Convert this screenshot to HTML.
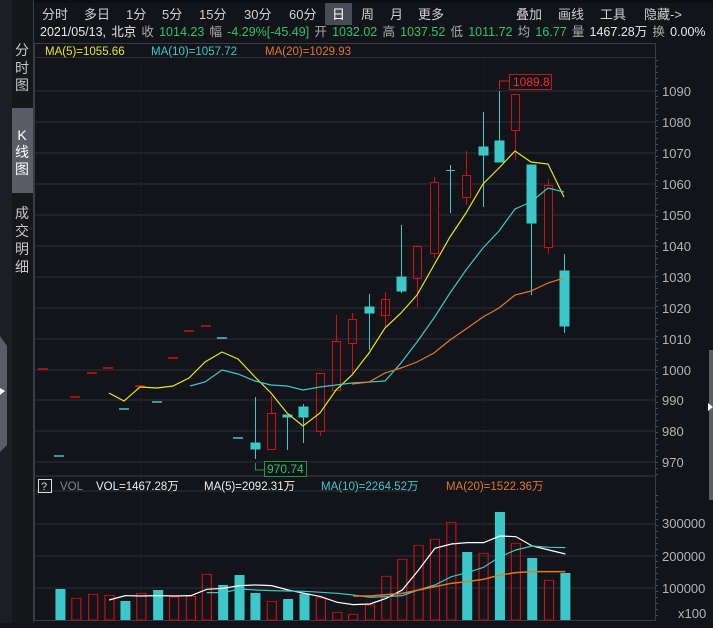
<!DOCTYPE html><html><head><meta charset="utf-8"><style>
body{margin:0;width:713px;height:623px;overflow:hidden;background:#121419;font-family:"Liberation Sans","Noto Sans CJK SC",sans-serif;}
svg text{font-family:"Liberation Sans","Noto Sans CJK SC",sans-serif;}
</style></head><body>
<svg width="713" height="623" viewBox="0 0 713 623" xmlns="http://www.w3.org/2000/svg">
<rect width="713" height="623" fill="#121419"/>
<rect x="0" y="0" width="12" height="623" fill="#1d1e23"/>
<rect x="12" y="0" width="21" height="623" fill="#16171b"/>
<rect x="33" y="0" width="1" height="623" fill="#3a3c42"/>
<rect x="12" y="108" width="21" height="85" fill="#5b5d66"/>
<path d="M0 336 L7 346 L7 445 L0 452Z" fill="#5b5d66"/>
<path d="M5 391 L0 388 L0 395Z" fill="#fff"/>
<g fill="#c8c8c8" font-size="14" text-anchor="middle">
<text x="22" y="55">分</text><text x="22" y="73">时</text><text x="22" y="90">图</text>
<text x="22" y="140" fill="#fff">K</text><text x="22" y="157" fill="#fff">线</text><text x="22" y="174" fill="#fff">图</text>
<text x="22" y="218">成</text><text x="22" y="236">交</text><text x="22" y="254">明</text><text x="22" y="272">细</text>
</g>
<rect x="34" y="0" width="679" height="3" fill="#0d0e11"/>
<rect x="325" y="3" width="27" height="22" fill="#4a4c55"/>
<g fill="#d0d0d0" font-size="13">
<text x="42" y="19">分时</text><text x="84" y="19">多日</text><text x="126" y="19">1分</text><text x="162" y="19">5分</text><text x="199" y="19">15分</text><text x="244" y="19">30分</text><text x="289" y="19">60分</text><text x="332" y="19" fill="#fff">日</text><text x="361" y="19">周</text><text x="390" y="19">月</text><text x="418" y="19">更多</text>
<text x="516" y="19">叠加</text><text x="558" y="19">画线</text><text x="600" y="19">工具</text><text x="644" y="19">隐藏-&gt;</text>
</g>
<g font-size="12.5">
<text x="40" y="36" fill="#e8e8e8" word-spacing="1.7">2021/05/13, 北京 <tspan fill="#aaa">收</tspan> <tspan fill="#2ec26a">1014.23</tspan> <tspan fill="#aaa">幅</tspan> <tspan fill="#2ec26a">-4.29%[-45.49]</tspan> <tspan fill="#aaa">开</tspan> <tspan fill="#2ec26a">1032.02</tspan> <tspan fill="#aaa">高</tspan> <tspan fill="#2ec26a">1037.52</tspan> <tspan fill="#aaa">低</tspan> <tspan fill="#2ec26a">1011.72</tspan> <tspan fill="#aaa">均</tspan> <tspan fill="#2ec26a">16.77</tspan> <tspan fill="#aaa">量</tspan> 1467.28万 <tspan fill="#aaa">换</tspan> 0.00%</text>
</g>
<rect x="34.5" y="43.5" width="621" height="577" fill="none" stroke="#3a3c42"/>
<line x1="35" y1="57.5" x2="655" y2="57.5" stroke="#2c2e33"/>
<g font-size="11.5">
<text x="45" y="55" fill="#e6e61a">MA(5)=1055.66</text>
<text x="151" y="55" fill="#3cc8c8">MA(10)=1057.72</text>
<text x="265" y="55" fill="#e0782c">MA(20)=1029.93</text>
</g>
<g stroke="#2e3035" stroke-width="1">
<line x1="35" y1="91" x2="655" y2="91"/><line x1="35" y1="122" x2="655" y2="122"/><line x1="35" y1="153" x2="655" y2="153"/><line x1="35" y1="184" x2="655" y2="184"/><line x1="35" y1="215" x2="655" y2="215"/><line x1="35" y1="246" x2="655" y2="246"/><line x1="35" y1="277" x2="655" y2="277"/><line x1="35" y1="308" x2="655" y2="308"/><line x1="35" y1="339" x2="655" y2="339"/><line x1="35" y1="370" x2="655" y2="370"/><line x1="35" y1="400" x2="655" y2="400"/><line x1="35" y1="431" x2="655" y2="431"/><line x1="35" y1="462" x2="655" y2="462"/>
<line x1="35" y1="476" x2="655" y2="476" stroke="#3a3c42"/>
<line x1="35" y1="491" x2="413" y2="491"/>
<line x1="35" y1="524" x2="655" y2="524"/><line x1="35" y1="556" x2="655" y2="556"/><line x1="35" y1="588" x2="655" y2="588"/>
</g>
<g stroke="#2e3035" stroke-dasharray="1,3"><line x1="141" y1="62" x2="141" y2="620"/><line x1="484" y1="62" x2="484" y2="620"/></g>
<g fill="#b4b4b4" font-size="13">
<text x="662" y="96">1090</text><text x="662" y="127">1080</text><text x="662" y="158">1070</text><text x="662" y="189">1060</text><text x="662" y="220">1050</text><text x="662" y="251">1040</text><text x="662" y="282">1030</text><text x="662" y="313">1020</text><text x="662" y="344">1010</text><text x="662" y="375">1000</text><text x="662" y="405">990</text><text x="662" y="436">980</text><text x="662" y="467">970</text>
</g>
<g stroke="#888" stroke-dasharray="1,5"><line x1="657" y1="60" x2="657" y2="475"/><line x1="657" y1="495" x2="657" y2="620"/></g>
<rect x="709" y="350" width="4" height="150" fill="#5b5d66"/>
<path d="M708 403 L713 407 L708 411Z" fill="#fff"/>
<g stroke-width="1.5">
<line x1="38" y1="369" x2="48" y2="369" stroke="#d01010"/>
<line x1="54" y1="456" x2="64" y2="456" stroke="#3cc8c8"/>
<line x1="70" y1="397" x2="80" y2="397" stroke="#d01010"/>
<line x1="87" y1="373" x2="97" y2="373" stroke="#d01010"/>
<line x1="103" y1="368" x2="113" y2="368" stroke="#d01010"/>
<line x1="119" y1="409" x2="129" y2="409" stroke="#3cc8c8"/>
<line x1="135" y1="386" x2="145" y2="386" stroke="#d01010"/>
<line x1="152" y1="402" x2="162" y2="402" stroke="#3cc8c8"/>
<line x1="168" y1="358" x2="178" y2="358" stroke="#d01010"/>
<line x1="184" y1="331" x2="194" y2="331" stroke="#d01010"/>
<line x1="201" y1="326" x2="211" y2="326" stroke="#d01010"/>
<line x1="217" y1="338" x2="227" y2="338" stroke="#3cc8c8"/>
<line x1="233" y1="438" x2="243" y2="438" stroke="#3cc8c8"/>
</g>
<g stroke-width="1">
<g stroke="#3cc8c8" fill="#3cc8c8"><line x1="255.5" y1="397" x2="255.5" y2="459"/><rect x="251" y="443" width="9" height="6"/></g>
<g stroke="#d01010" fill="none"><line x1="271.5" y1="396" x2="271.5" y2="413"/><rect x="267.5" y="413.5" width="8" height="36"/></g>
<g stroke="#3cc8c8" fill="#3cc8c8"><line x1="287.5" y1="415" x2="287.5" y2="450"/><rect x="283" y="415" width="9" height="2"/></g>
<g stroke="#3cc8c8" fill="#3cc8c8"><line x1="303.5" y1="404" x2="303.5" y2="443"/><rect x="299" y="407" width="9" height="10"/></g>
<g stroke="#d01010" fill="none"><line x1="320.5" y1="432" x2="320.5" y2="436"/><rect x="316.5" y="373.5" width="8" height="58"/></g>
<g stroke="#d01010" fill="none"><line x1="336.5" y1="315" x2="336.5" y2="341"/><rect x="332.5" y="341.5" width="8" height="49"/></g>
<g stroke="#d01010" fill="none"><line x1="352.5" y1="313" x2="352.5" y2="319"/><line x1="352.5" y1="343" x2="352.5" y2="373"/><rect x="348.5" y="319.5" width="8" height="24"/></g>
<g stroke="#3cc8c8" fill="#3cc8c8"><line x1="369.5" y1="294" x2="369.5" y2="350"/><rect x="365" y="307" width="9" height="6"/></g>
<g stroke="#d01010" fill="none"><line x1="385.5" y1="292" x2="385.5" y2="327"/><rect x="381.5" y="299.5" width="8" height="16"/></g>
<g stroke="#3cc8c8" fill="#3cc8c8"><line x1="401.5" y1="225" x2="401.5" y2="293"/><rect x="397" y="277" width="9" height="14"/></g>
<g stroke="#d01010" fill="none"><line x1="417.5" y1="278" x2="417.5" y2="307"/><rect x="413.5" y="246.5" width="8" height="32"/></g>
<g stroke="#d01010" fill="none"><line x1="434.5" y1="177" x2="434.5" y2="258"/><rect x="430.5" y="182.5" width="8" height="71" fill="#121419"/></g>
<g stroke="#3cc8c8" fill="#3cc8c8"><line x1="450.5" y1="165" x2="450.5" y2="213"/><line x1="446" y1="170.5" x2="455" y2="170.5"/></g>
<g stroke="#d01010" fill="none"><line x1="466.5" y1="151" x2="466.5" y2="205"/><rect x="462.5" y="175.5" width="8" height="22" fill="#121419"/></g>
<g stroke="#3cc8c8" fill="#3cc8c8"><line x1="483.5" y1="112" x2="483.5" y2="207"/><rect x="479" y="147" width="9" height="8"/></g>
<g stroke="#3cc8c8" fill="#3cc8c8"><line x1="499.5" y1="91" x2="499.5" y2="162"/><rect x="495" y="141" width="9" height="21"/></g>
<g stroke="#d01010" fill="none"><line x1="515.5" y1="130" x2="515.5" y2="160"/><rect x="511.5" y="94.5" width="8" height="36"/></g>
<g stroke="#3cc8c8" fill="#3cc8c8"><line x1="531.5" y1="165" x2="531.5" y2="295"/><rect x="527" y="165" width="9" height="58"/></g>
<g stroke="#d01010" fill="none"><line x1="548.5" y1="179" x2="548.5" y2="254"/><rect x="544.5" y="185.5" width="8" height="62" fill="#121419"/></g>
<g stroke="#3cc8c8" fill="#3cc8c8"><line x1="564.5" y1="254" x2="564.5" y2="333"/><rect x="560" y="271" width="9" height="55"/></g>
</g>
<polyline fill="none" stroke="#e6e61a" stroke-width="1.2" points="109,393 124,401 140,387 157,388 173,386 189,378 205,362 222,352 238,359 255,377 271,393 287,413 303,426 320,413 336,390 352,375 369,353 385,328 401,313 417,295 434,265 450,237 466,213 483,184 499,168 515,151 531,162 548,164 564,197"/>
<polyline fill="none" stroke="#3cc8c8" stroke-width="1.2" points="190,386 205,382 222,370 238,374 255,381 271,385 287,386 303,390 320,387 336,385 352,383 369,382 385,381 401,363 417,342 434,318 450,293 466,270 483,248 499,231 515,209 531,202 548,188 564,192"/>
<polyline fill="none" stroke="#e0782c" stroke-width="1.2" points="352,384 369,382 385,373 401,368 417,362 434,353 450,340 466,329 483,317 499,308 515,295 531,291 548,283 564,278"/>
<path d="M499.5 89 L499.5 81 L509 81" stroke="#d02020" fill="none"/>
<rect x="509.5" y="74.5" width="42" height="15" fill="#121419" stroke="#b02020"/>
<text x="513" y="86" fill="#f03030" font-size="12">1089.8</text>
<path d="M255.5 463 L255.5 470 L264 470" stroke="#1a9a40" fill="none"/>
<rect x="264.5" y="461.5" width="42" height="15" fill="#121419" stroke="#1a9a40"/>
<text x="267" y="473" fill="#2ec26a" font-size="12">970.74</text>
<rect x="38.5" y="479.5" width="13" height="13" fill="none" stroke="#ddd"/>
<text x="41" y="490" fill="#ddd" font-size="11">?</text>
<g font-size="11.5">
<text x="60" y="490" fill="#888">VOL</text>
<text x="96" y="490" fill="#eee">VOL=1467.28万</text>
<text x="204" y="490" fill="#eee">MA(5)=2092.31万</text>
<text x="321" y="490" fill="#3cc8c8">MA(10)=2264.52万</text>
<text x="446" y="490" fill="#e0782c">MA(20)=1522.36万</text>
</g>
<g fill="#b4b4b4" font-size="13">
<text x="662" y="528">300000</text><text x="662" y="561">200000</text><text x="662" y="593">100000</text><text x="678" y="618">x100</text>
</g>
<g transform="translate(0,470) scale(0.4545,0.3333)">
<g fill="#3cc8c8">
<rect x="122" y="357" width="22" height="93"/><rect x="265" y="393" width="22" height="57"/><rect x="337" y="360" width="22" height="90"/><rect x="480" y="345" width="22" height="105"/><rect x="516" y="315" width="22" height="135"/><rect x="551" y="369" width="22" height="81"/><rect x="623" y="387" width="22" height="63"/><rect x="659" y="371" width="22" height="79"/><rect x="1017" y="246" width="22" height="204"/><rect x="1089" y="126" width="22" height="324"/><rect x="1160" y="264" width="22" height="186"/><rect x="1233" y="309" width="22" height="141"/>
</g>
<g fill="none" stroke="#d01010" stroke-width="2.5">
<rect x="158" y="385" width="20" height="65"/><rect x="195" y="373" width="20" height="77"/><rect x="231" y="376" width="20" height="74"/><rect x="301" y="370" width="20" height="80"/><rect x="373" y="381" width="20" height="69"/><rect x="410" y="379" width="20" height="71"/><rect x="445" y="313" width="20" height="137"/><rect x="588" y="394" width="20" height="56"/><rect x="696" y="384" width="20" height="66"/><rect x="732" y="427" width="20" height="23"/><rect x="767" y="433" width="20" height="17"/><rect x="804" y="405" width="20" height="45"/><rect x="840" y="319" width="20" height="131"/><rect x="875" y="268" width="20" height="182"/><rect x="911" y="226" width="20" height="224"/><rect x="947" y="208" width="20" height="242"/><rect x="983" y="157" width="20" height="293"/><rect x="1054" y="250" width="20" height="200"/><rect x="1125" y="220" width="20" height="230"/><rect x="1198" y="331" width="20" height="119"/>
</g>
<polyline fill="none" stroke="#fff" stroke-width="1.2" vector-effect="non-scaling-stroke" points="240,390 276,377 311,378 348,377 383,378 420,377 455,358 491,355 527,347 562,345 598,347 634,360 670,370 706,380 742,397 777,404 814,402 850,385 885,360 921,300 957,235 993,222 1028,218 1064,218 1100,198 1135,200 1171,228 1208,240 1244,252"/>
<polyline fill="none" stroke="#3cc8c8" stroke-width="1.2" vector-effect="non-scaling-stroke" points="455,368 491,368 527,357 562,360 598,362 634,363 670,364 706,367 742,370 777,375 814,382 850,380 885,377 921,360 957,345 993,320 1028,308 1064,292 1100,260 1135,240 1171,228 1208,232 1244,233"/>
<polyline fill="none" stroke="#e0782c" stroke-width="1.5" vector-effect="non-scaling-stroke" points="777,378 814,378 850,374 885,370 921,360 957,350 993,340 1028,335 1064,328 1100,315 1135,308 1171,305 1208,305 1244,305"/>
</g>
</svg>
</body></html>
